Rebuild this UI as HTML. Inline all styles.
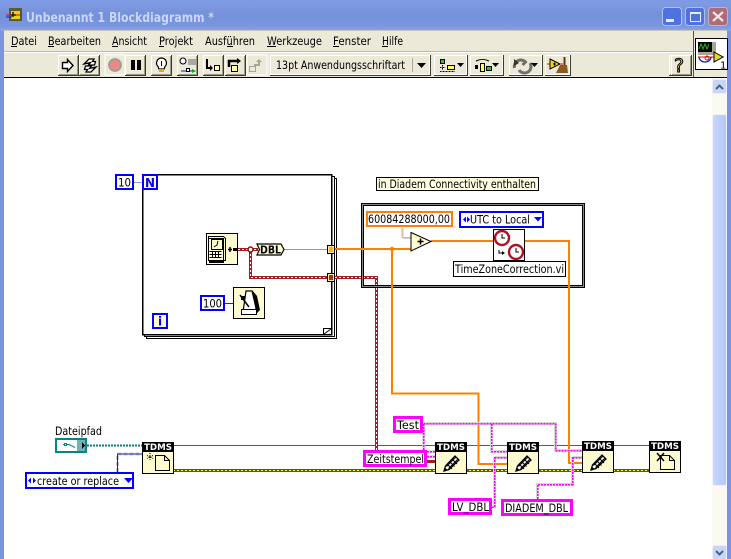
<!DOCTYPE html>
<html lang="de"><head><meta charset="utf-8"><title>Unbenannt 1 Blockdiagramm *</title>
<style>
html,body{margin:0;padding:0;width:731px;height:559px;overflow:hidden;background:#fff}
svg{display:block}
text{font-family:"DejaVu Sans","Liberation Sans",sans-serif;font-size:11.5px;fill:#000}
.c{shape-rendering:crispEdges}
</style></head><body>
<svg width="731" height="559" viewBox="0 0 731 559" xmlns="http://www.w3.org/2000/svg">
<defs>
<linearGradient id="tb" x1="0" y1="0" x2="0" y2="1"><stop offset="0" stop-color="#7c9ae6"/><stop offset=".12" stop-color="#7f9ae0"/><stop offset=".5" stop-color="#7390da"/><stop offset=".85" stop-color="#7b97e0"/><stop offset="1" stop-color="#8ba7ea"/></linearGradient>
<linearGradient id="sb" x1="0" y1="0" x2="1" y2="0"><stop offset="0" stop-color="#c8d8fb"/><stop offset="1" stop-color="#b4c8f6"/></linearGradient>
<g id="btn" class="c"><rect width="21" height="21" fill="#3c3b36"/><rect width="20" height="20" fill="#fff"/><rect x="1" y="1" width="18" height="18" fill="#ece9d8"/><rect x="19" y="1" width="1" height="19" fill="#9a9888"/><rect x="1" y="19" width="19" height="1" fill="#9a9888"/></g>
<g id="pencil"><path d="M3 21l1.500-5 9.500-10 4 4-10 9.500z" fill="#fff" stroke="#000" stroke-width="1.300"/><path d="M5.500 16.500l9.500-9.500M7.500 18.500l9.500-9.500M6 14l5 5M8.500 11.500l5 5M11 9l5 5" stroke="#000" stroke-width="1"/><path d="M3 21l1-3.500 2.500 2.500z" fill="#000"/></g>
</defs>

<!-- window chrome -->
<rect class="c" width="731" height="559" fill="#7b94dc"/>
<rect class="c" width="731" height="31" fill="url(#tb)"/>
<rect class="c" x="4" y="31" width="723" height="528" fill="#ece9d8"/>
<rect class="c" x="4" y="30" width="723" height="1" fill="#c9c6b6"/>

<!-- title icon -->
<rect class="c" x="9" y="8" width="13" height="13" fill="#5c5a30"/>
<rect class="c" x="11" y="11" width="9" height="8" fill="#e3d21a"/>
<path d="M6 15h16" stroke="#d01010" stroke-width="1"/><path d="M6 17h6" stroke="#1020c0" stroke-width="1"/>
<path d="M13 12v5M11 15h5" stroke="#000" stroke-width="1.200"/>
<text x="26" y="22" style="font-size:13.500px;font-weight:bold;fill:#ccd6f4" textLength="188" lengthAdjust="spacingAndGlyphs">Unbenannt 1 Blockdiagramm *</text>

<!-- window buttons -->
<rect x="662.500" y="7.500" width="19" height="18" rx="3" fill="#4f72dc" stroke="#aebff0"/>
<rect class="c" x="666" y="19" width="8" height="3" fill="#e8ecfa"/>
<rect x="685.500" y="7.500" width="19" height="18" rx="3" fill="#4f72dc" stroke="#aebff0"/>
<rect class="c" x="690.500" y="12.500" width="10" height="9" fill="none" stroke="#e8ecfa"/><rect class="c" x="690" y="12" width="11" height="2" fill="#e8ecfa"/>
<rect x="708.500" y="7.500" width="19" height="18" rx="3" fill="#b06a78" stroke="#c6b2c8"/>
<path d="M713 12l10 9M723 12l-10 9" stroke="#f2e8ea" stroke-width="2.200"/>

<!-- menu -->
<text x="11" y="45" textLength="26" lengthAdjust="spacingAndGlyphs">Datei</text>
<text x="48" y="45" textLength="53" lengthAdjust="spacingAndGlyphs">Bearbeiten</text>
<text x="112" y="45" textLength="35" lengthAdjust="spacingAndGlyphs">Ansicht</text>
<text x="159" y="45" textLength="34" lengthAdjust="spacingAndGlyphs">Projekt</text>
<text x="205" y="45" textLength="50" lengthAdjust="spacingAndGlyphs">Ausführen</text>
<text x="267" y="45" textLength="55" lengthAdjust="spacingAndGlyphs">Werkzeuge</text>
<text x="333" y="45" textLength="38" lengthAdjust="spacingAndGlyphs">Fenster</text>
<text x="382" y="45" textLength="21" lengthAdjust="spacingAndGlyphs">Hilfe</text>
<g class="c" fill="#000"><rect x="11" y="46" width="6" height="1"/><rect x="48" y="46" width="6" height="1"/><rect x="112" y="46" width="6" height="1"/><rect x="159" y="46" width="5" height="1"/><rect x="227" y="46" width="6" height="1"/><rect x="267" y="46" width="9" height="1"/><rect x="333" y="46" width="6" height="1"/><rect x="382" y="46" width="6" height="1"/></g>
<rect class="c" x="4" y="52" width="689" height="1" fill="#fff"/>
<rect class="c" x="4" y="51" width="689" height="1" fill="#bdbaa8"/>

<!-- toolbar -->
<use href="#btn" x="58" y="55"/><use href="#btn" x="79" y="55"/>
<path d="M62.500 62.500h5v-3l5.500 6-5.500 6v-3h-5z" fill="#fff" stroke="#000" stroke-width="1.400"/>
<path d="M84 64l5-5h5l-1.500 2.500h3l-1 3.500h-6l2-2.500zM96 67l-5 5h-5l1.500-2.500h-3l1-3.500h6l-2 2.500z" fill="#fff" stroke="#000" stroke-width="1.300"/>
<rect class="c" x="105" y="55" width="20" height="20" fill="#ece9d8" stroke="#fff"/>
<circle cx="115" cy="65" r="6" fill="#e88888" stroke="#a09e92" stroke-width="1.800"/>
<use href="#btn" x="125" y="55"/><rect class="c" x="131" y="60" width="4" height="10" fill="#000"/><rect class="c" x="137" y="60" width="4" height="10" fill="#000"/>
<use href="#btn" x="151" y="55"/>
<path d="M161.500 58a5 5 0 0 0-3.500 8.500l1 2.500h5l1-2.500a5 5 0 0 0-3.500-8.500z" fill="#fff" stroke="#000" stroke-width="1.200"/><path d="M161.500 61v5" stroke="#000"/><rect class="c" x="159" y="69" width="5" height="3" fill="#d8b000"/>
<use href="#btn" x="177" y="55"/>
<circle cx="183" cy="61" r="3" fill="#fff" stroke="#000"/><rect class="c" x="188" y="59" width="8" height="6" fill="#a8a8a8"/>
<path d="M181 71h13" stroke="#1020d0"/><path d="M192 69l4 2-4 2z" fill="#10a020"/><rect class="c" x="186.500" y="68.500" width="3" height="3" fill="#fff" stroke="#000"/>
<use href="#btn" x="203" y="55"/><use href="#btn" x="225" y="55"/>
<path d="M207 59v9h5" fill="none" stroke="#000" stroke-width="2"/><path d="M210 65l3 3-3 3z" fill="#000"/><rect class="c" x="214.500" y="65.500" width="5" height="5" fill="#ffffa0" stroke="#000"/>
<path d="M229 67v-6h9" fill="none" stroke="#000" stroke-width="2.500"/><path d="M237 58l4 3-4 3z" fill="#000"/><rect class="c" x="231.500" y="65.500" width="6" height="6" fill="#ffffa0" stroke="#000"/>
<rect class="c" x="247" y="55" width="20" height="20" fill="#ece9d8" stroke="#fff"/>
<rect class="c" x="249.500" y="66.500" width="6" height="5" fill="#ece9d8" stroke="#a8a594"/><path d="M254 65h5v-4" fill="none" stroke="#a8a594" stroke-width="2"/><path d="M256 62l3-3 3 3z" fill="#a8a594"/>

<!-- font ring -->
<rect class="c" x="270" y="55" width="161" height="21" fill="#3c3b36"/><rect class="c" x="270" y="55" width="160" height="20" fill="#fff"/><rect class="c" x="271" y="56" width="158" height="18" fill="#ece9d8"/>
<text x="276" y="69" textLength="129" lengthAdjust="spacingAndGlyphs">13pt Anwendungsschriftart</text>
<rect class="c" x="412" y="58" width="1" height="14" fill="#aaa89a"/><path d="M417 63h9l-4.500 5z" fill="#000"/>

<!-- align etc -->
<g class="c">
<rect x="434" y="55" width="34" height="21" fill="#3c3b36"/><rect x="434" y="55" width="33" height="20" fill="#fff"/><rect x="435" y="56" width="31" height="18" fill="#ece9d8"/>
<rect x="470" y="55" width="34" height="21" fill="#3c3b36"/><rect x="470" y="55" width="33" height="20" fill="#fff"/><rect x="471" y="56" width="31" height="18" fill="#ece9d8"/>
<rect x="509" y="55" width="34" height="21" fill="#3c3b36"/><rect x="509" y="55" width="33" height="20" fill="#fff"/><rect x="510" y="56" width="31" height="18" fill="#ece9d8"/>
<rect x="545" y="55" width="26" height="21" fill="#3c3b36"/><rect x="545" y="55" width="25" height="20" fill="#fff"/><rect x="546" y="56" width="23" height="18" fill="#ece9d8"/>
<rect x="440.500" y="59.500" width="4" height="4" fill="#30c030" stroke="#000"/><rect x="447.500" y="65.500" width="7" height="4" fill="#ffff60" stroke="#000"/>
<rect x="475" y="65" width="3" height="4" fill="#000"/><rect x="480.500" y="63.500" width="4" height="8" fill="#ffff60" stroke="#000"/><rect x="486.500" y="66.500" width="5" height="4" fill="#30c030" stroke="#000"/>
</g>
<path d="M442.500 65v5M440 67.500h5M440 71.500h15" stroke="#000" stroke-dasharray="1 .5" fill="none"/><path d="M457 63h7l-3.500 4z" fill="#000"/>
<path d="M476 61c4-2 9-2 13 0" fill="none" stroke="#000"/><path d="M492 63h7l-3.500 4z" fill="#000"/>
<path d="M514.500 68a6.500 6.500 0 0 1 11-6l-3 3M530 63a6.500 6.500 0 0 1-11 7" fill="none" stroke="#70706a" stroke-width="3"/><path d="M514 59l5 4-5 3z" fill="#333"/><path d="M531 63h7l-3.500 4z" fill="#000"/>
<path d="M550 59l10 5-10 5z" fill="#e8d820" stroke="#000"/><path d="M553 64h3M554.500 62.500v3" stroke="#000"/><path d="M547 64h3M560 64h3" stroke="#d01010"/><path d="M564.500 57v8" stroke="#5a3a10" stroke-width="2"/><path d="M556 73l4-8h7l1 8z" fill="#8a5a20"/>
<use href="#btn" x="669" y="55"/><use href="#btn" x="671" y="55"/>
<text x="674" y="72" style="font-size:19px;fill:#f5e050;stroke:#000;stroke-width:1">?</text>

<!-- separators and canvas -->
<rect class="c" x="693" y="31" width="1" height="46" fill="#54534c"/>
<rect class="c" x="4" y="77" width="723" height="1" fill="#000"/>
<rect class="c" x="4" y="78" width="708" height="481" fill="#fff"/>
<!-- vi icon -->
<rect class="c" x="695.500" y="38.500" width="32" height="31" fill="#fff" stroke="#000"/>
<rect class="c" x="698" y="42" width="18" height="13" fill="#a8a694"/><rect class="c" x="698" y="42" width="14" height="10" fill="#000"/>
<path d="M699 49l2-5 2 5 2-5 2 5 2-5" fill="none" stroke="#20c020"/>
<path d="M698 57h26" stroke="#d01010"/><path d="M699 57a6 5 0 0 0 12 0" fill="none" stroke="#1020c0" stroke-width="1.300"/><circle cx="707" cy="58" r="2" fill="none" stroke="#d01010"/><path d="M714 52l9 5-9 5z" fill="#e8d820" stroke="#000"/>
<text x="720" y="68.500" style="font-size:10px">1</text>

<!-- scrollbar -->
<rect class="c" x="712" y="78" width="15" height="481" fill="#fbfaf0"/>
<rect x="712.500" y="79.500" width="14" height="14" rx="2" fill="#c6d5f8" stroke="#e9eefb"/>
<path d="M716 89l3.500-3.500 3.500 3.500" fill="none" stroke="#4d6185" stroke-width="2"/>
<rect x="712.500" y="114.500" width="14" height="371" rx="2" fill="url(#sb)" stroke="#eef2fd"/>
<rect x="712.500" y="545.500" width="14" height="14" rx="2" fill="#c6d5f8" stroke="#e9eefb"/>
<path d="M716 551l3.500 3.500 3.500-3.500" fill="none" stroke="#4d6185" stroke-width="2"/>

<!-- main horizontal wires -->
<path class="c" d="M153 445.500H650" stroke="#008080" fill="none"/>
<path class="c" d="M173 470.500H650" stroke="#5c5c00" stroke-width="3" fill="none"/>
<path class="c" d="M173 470.500H650" stroke="#ffff30" stroke-dasharray="2 2" fill="none"/>
<path class="c" d="M87 445.500H142" stroke="#008080" stroke-width="2" stroke-dasharray="2 1" fill="none"/>
<path class="c" d="M117.500 472v-18H142" stroke="#c8c8d8" stroke-width="3" stroke-dasharray="4 2" fill="none"/>
<path class="c" d="M117.500 472v-18H142" stroke="#2020b0" fill="none"/>

<!-- for loop -->
<rect class="c" x="146.500" y="178.500" width="190" height="160" fill="#fff" stroke="#000"/>
<rect class="c" x="144.500" y="176.500" width="190" height="160" fill="#fff" stroke="#000"/>
<rect class="c" x="142.500" y="174.500" width="189" height="160" fill="#fff" stroke="#000" stroke-width="1.500"/>
<path d="M323.500 334.500v-6h8l-8 6" fill="#fff" stroke="#000"/>

<!-- wires within loop -->
<path class="c" d="M238 249.500h20M250.500 250v27.500H327" stroke="#a02020" stroke-width="3" fill="none"/>
<path class="c" d="M238 249.500h20M250.500 250v27.500H327" stroke="#fff" stroke-dasharray="2 2" fill="none"/>
<path class="c" d="M282 249.500H327" stroke="#ff8000" fill="none"/>
<circle cx="250.500" cy="249.500" r="2.500" fill="#fff" stroke="#8a1010" stroke-width="1.500"/>
<path d="M257 244h24l3 5.500-3 5.500h-24l2.500-5.500z" fill="#fffbd0" stroke="#000" stroke-width="1.200"/>
<text x="260" y="253.500" style="font-size:10.500px;font-weight:bold" textLength="21" lengthAdjust="spacingAndGlyphs">DBL</text>

<!-- outer orange/red wires -->
<path class="c" d="M335 277.500H376.500V451" stroke="#a02020" stroke-width="3" fill="none"/>
<path class="c" d="M335 277.500H376.500V451" stroke="#fff" stroke-dasharray="2 2" fill="none"/>
<path class="c" d="M392 249V393.500H478.500V464H507" stroke="#ff8000" stroke-width="2" fill="none"/>

<!-- flat sequence -->
<rect class="c" x="361.500" y="203.500" width="223" height="84" fill="none" stroke="#000"/>
<rect class="c" x="362.500" y="204.500" width="221" height="82" fill="none" stroke="#888"/>
<rect class="c" x="363.500" y="205.500" width="219" height="80" fill="none" stroke="#000"/>
<path class="c" d="M392 249V393" stroke="#ff8000" stroke-width="2" fill="none"/>
<path class="c" d="M335 249H411" stroke="#ff8000" stroke-width="2" fill="none"/>
<circle cx="392" cy="249" r="2.200" fill="#ff8000"/>
<path class="c" d="M431 241H494M525 241H569V463H582" stroke="#ff8000" stroke-width="2" fill="none"/>
<path class="c" d="M402 228V237.500H411" stroke="#ffb060" fill="none"/>
<path class="c" d="M403 228V238.500H411" stroke="#ccc" fill="none"/>
<path d="M411 232.500l20 9-20 9.500z" fill="#fffbd0" stroke="#000"/><path d="M417.500 241.500h6M420.500 238.500v6" stroke="#000" stroke-width="1.500"/>

<!-- tunnels -->
<rect class="c" x="327.500" y="245.500" width="7" height="8" fill="#ffe8a0" stroke="#000"/><rect class="c" x="329" y="247" width="4" height="5" fill="#ffb030"/>
<rect class="c" x="327.500" y="273.500" width="7" height="8" fill="#ffe8a0" stroke="#000"/><rect class="c" x="329" y="275" width="4" height="5" fill="#a03020"/>

<!-- timestamp node -->
<rect class="c" x="206.500" y="233.500" width="31" height="31" fill="#fffbd0" stroke="#000"/>
<path d="M208.500 236.500h15l2 2v22h-17zM208.500 238.500h15v22" fill="#fffbd0" stroke="#000"/>
<rect class="c" x="211.500" y="239.500" width="11" height="10" fill="#fffbd0" stroke="#000"/>
<path d="M214 247l3-2 1-4" stroke="#000" fill="none"/>
<g class="c" stroke="#000"><path d="M209.500 251.500h12M209.500 254.500h12M209.500 257.500h12M212.500 251v7M215.500 251v7M218.500 251v7"/></g>
<rect class="c" x="209" y="261" width="15" height="2" fill="#000"/>
<path d="M228 249.500h4M230 247v5" stroke="#000" stroke-width="1.500"/><rect class="c" x="233" y="248" width="4" height="3" fill="#000"/>

<!-- constants -->
<rect class="c" x="116" y="175" width="17" height="14" fill="#fff" stroke="#0000ff" stroke-width="2"/>
<text x="118" y="186.500" textLength="13" lengthAdjust="spacingAndGlyphs">10</text>
<path class="c" d="M134 182.500h8" stroke="#9a9ad0"/>
<rect class="c" x="143" y="175" width="14" height="14" fill="#fffbd0" stroke="#0000ff" stroke-width="2"/>
<text x="145" y="187" style="font-size:12px;font-weight:bold;fill:#0000ff" textLength="10" lengthAdjust="spacingAndGlyphs">N</text>
<rect class="c" x="153" y="314" width="14" height="14" fill="#fffbd0" stroke="#0000ff" stroke-width="2"/>
<text x="158" y="325.500" style="font-size:12px;font-weight:bold;fill:#0000ff">i</text>
<rect class="c" x="201" y="296" width="23" height="14" fill="#fff" stroke="#0000ff" stroke-width="2"/>
<text x="203" y="307.500" textLength="19" lengthAdjust="spacingAndGlyphs">100</text>
<path class="c" d="M225 303.500h8" stroke="#2020d0"/>

<!-- metronome -->
<rect class="c" x="233.500" y="287.500" width="31" height="31" fill="#fffbd0" stroke="#000"/>
<path d="M243 312l3-21h6l5 21z" fill="#fff" stroke="#000" stroke-width="1.200"/><path d="M252 290l5 6 3 14-4 4-1-8z" fill="#000"/><path d="M240 295l9 12" stroke="#000" stroke-width="1.500"/><rect class="c" x="241" y="296" width="4" height="4" fill="#000"/><rect class="c" x="241.500" y="309.500" width="15" height="5" fill="#fff" stroke="#000"/>

<!-- free label -->
<rect class="c" x="376.500" y="177.500" width="162" height="13" fill="#fffce0" stroke="#000"/>
<text x="378" y="188" textLength="158" lengthAdjust="spacingAndGlyphs">in Diadem Connectivity enthalten</text>

<!-- seq contents -->
<rect class="c" x="367" y="212" width="85" height="14" fill="#fff" stroke="#ff8000" stroke-width="2"/>
<text x="368" y="223" textLength="82" lengthAdjust="spacingAndGlyphs">60084288000,00</text>
<rect class="c" x="460" y="212" width="83" height="15" fill="#fff" stroke="#0000ff" stroke-width="2"/>
<path d="M466 216.500l-3 3 3 3zM467 216.500l3 3-3 3z" fill="#0000ff"/>
<text x="470" y="223.500" textLength="60" lengthAdjust="spacingAndGlyphs">UTC to Local</text>
<path d="M534 217h8l-4 4.500z" fill="#0000ff"/>
<rect class="c" x="493.500" y="229.500" width="31" height="31" fill="#fff" stroke="#000"/>
<circle cx="502" cy="238" r="7" fill="#fff" stroke="#b01020" stroke-width="2.400"/><path d="M502 234v4h3" fill="none" stroke="#000"/>
<circle cx="516" cy="252" r="7" fill="#fff" stroke="#b01020" stroke-width="2.400"/><path d="M516 248v4h3" fill="none" stroke="#000"/>
<path d="M499 250v3h4" fill="none" stroke="#000"/><path d="M502 251l3 2-3 2z" fill="#000"/>
<rect class="c" x="453.500" y="261.500" width="112" height="15" fill="#fff" stroke="#000"/>
<text x="455" y="273" textLength="109" lengthAdjust="spacingAndGlyphs">TimeZoneCorrection.vi</text>

<!-- pink wires -->
<g fill="none" class="c">
<path d="M423.500 423.500H555.500V450.500H582M423.500 424V451M427 451.500H435M427 456.500H435M491.500 424V451.500H507M494.500 457.500H507M494.500 457V507H492M572.500 457.500H582M572.500 457V484.500H537.500V499" stroke="#d8d8d8" stroke-width="3"/>
<path d="M423.500 423.500H555.500V450.500H582M423.500 424V451M427 451.500H435M427 456.500H435M491.500 424V451.500H507M494.500 457.500H507M494.500 457V507H492M572.500 457.500H582M572.500 457V484.500H537.500V499" stroke="#ff00ff" stroke-width="1.500" stroke-dasharray="2 1"/>
</g>
<path class="c" d="M427 461.500h8" stroke="#a02020" stroke-width="3" fill="none"/>

<!-- path control -->
<text x="55" y="435" textLength="47" lengthAdjust="spacingAndGlyphs">Dateipfad</text>
<rect class="c" x="56" y="439" width="30" height="13" fill="#fff" stroke="#088484" stroke-width="2"/>
<rect class="c" x="77" y="440" width="8" height="11" fill="#70b4b4"/>
<path d="M82 442l3 3.500-3 3.500z" fill="#000"/>
<path d="M63 444.500l6 0 6 3" fill="none" stroke="#088484"/><rect class="c" x="64.500" y="443.500" width="2" height="2" fill="#fff" stroke="#088484"/>

<!-- enum -->
<rect class="c" x="26" y="473" width="107" height="15" fill="#fff" stroke="#0000ff" stroke-width="2"/>
<path d="M31 477.500l-3 3 3 3zM33 477.500l3 3-3 3z" fill="#0000ff"/>
<text x="37" y="485" textLength="82" lengthAdjust="spacingAndGlyphs">create or replace</text>
<path d="M124 478h9l-4.500 5z" fill="#0000ff"/>

<!-- TDMS nodes -->
<g class="c">
<rect x="142" y="442" width="32" height="9" fill="#000"/><rect x="142.500" y="451.500" width="31" height="22" fill="#fffbd0" stroke="#000"/>
<rect x="435" y="442" width="32" height="9" fill="#000"/><rect x="435.500" y="451.500" width="31" height="22" fill="#fffbd0" stroke="#000"/>
<rect x="507" y="442" width="32" height="9" fill="#000"/><rect x="507.500" y="451.500" width="31" height="22" fill="#fffbd0" stroke="#000"/>
<rect x="582" y="441" width="32" height="9" fill="#000"/><rect x="582.500" y="450.500" width="31" height="22" fill="#fffbd0" stroke="#000"/>
<rect x="649" y="441" width="32" height="9" fill="#000"/><rect x="649.500" y="450.500" width="31" height="22" fill="#fffbd0" stroke="#000"/>
</g>
<text x="144" y="450" style="font-size:8.500px;font-weight:bold;fill:#fff" textLength="28" lengthAdjust="spacingAndGlyphs">TDMS</text>
<text x="437" y="450" style="font-size:8.500px;font-weight:bold;fill:#fff" textLength="28" lengthAdjust="spacingAndGlyphs">TDMS</text>
<text x="509" y="450" style="font-size:8.500px;font-weight:bold;fill:#fff" textLength="28" lengthAdjust="spacingAndGlyphs">TDMS</text>
<text x="584" y="449" style="font-size:8.500px;font-weight:bold;fill:#fff" textLength="28" lengthAdjust="spacingAndGlyphs">TDMS</text>
<text x="651" y="449" style="font-size:8.500px;font-weight:bold;fill:#fff" textLength="28" lengthAdjust="spacingAndGlyphs">TDMS</text>
<path d="M155.500 470.500v-15h9l5 5v10z" fill="#fffbd0" stroke="#000"/><path d="M164.500 455.500v5h5" fill="none" stroke="#000"/>
<path d="M147 455.500l6 3M153 455.500l-6 3M150 453v8" stroke="#000" stroke-dasharray="1 1"/>
<use href="#pencil" x="441" y="450"/><use href="#pencil" x="513" y="450"/><use href="#pencil" x="588" y="449"/>
<path d="M660.500 469.500v-14h9l5 5v9z" fill="#fffbd0" stroke="#000"/><path d="M669.500 455.500v5h5" fill="none" stroke="#000"/>
<path d="M657 453l7 8M664 453l-7 8" stroke="#000" stroke-width="1.500"/>

<!-- string constants -->
<rect class="c" x="394.500" y="417.500" width="27" height="14" fill="#fff" stroke="#ff00ff" stroke-width="3"/>
<text x="397" y="429" textLength="22" lengthAdjust="spacingAndGlyphs">Test</text>
<rect class="c" x="364.500" y="451.500" width="61" height="14" fill="#fff" stroke="#ff00ff" stroke-width="3"/>
<text x="367" y="463" textLength="57" lengthAdjust="spacingAndGlyphs">Zeitstempel</text>
<rect class="c" x="449.500" y="499.500" width="41" height="14" fill="#fff" stroke="#ff00ff" stroke-width="3"/>
<text x="452" y="511" textLength="37" lengthAdjust="spacingAndGlyphs">LV_DBL</text>
<rect class="c" x="502.500" y="500.500" width="69" height="14" fill="#fff" stroke="#ff00ff" stroke-width="3"/>
<text x="505" y="512" textLength="63" lengthAdjust="spacingAndGlyphs">DIADEM_DBL</text>
</svg>
</body></html>
